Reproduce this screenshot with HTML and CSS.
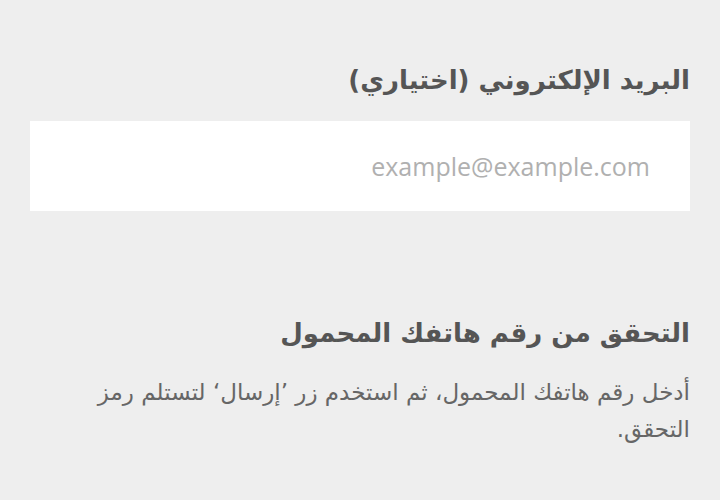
FILE: index.html
```html
<!DOCTYPE html>
<html lang="ar" dir="rtl">
<head>
<meta charset="utf-8">
<link rel="stylesheet" href="styles.css">
</head>
<body>
<div class="page">
  <section class="field">
    <label class="label" for="email">البريد الإلكتروني (اختياري)</label>
    <input class="input" id="email" type="email" placeholder="example@example.com">
  </section>
  <section class="verify">
    <h2 class="title">التحقق من رقم هاتفك المحمول</h2>
    <p class="desc">أدخل رقم هاتفك المحمول، ثم استخدم زر ’إرسال‘ لتستلم رمز التحقق.</p>
  </section>
</div>
</body>
</html>
```
FILE: styles.css
```css
html, body {
  margin: 0;
  padding: 0;
  background: #eeeeee;
}
.page {
  padding: 58px 30px 0 30px;
  font-family: "DejaVu Sans", "Noto Sans", sans-serif;
  display: flex;
  flex-direction: column;
}
.field {
  display: flex;
  flex-direction: column;
}
.label {
  font-size: 26px;
  font-weight: bold;
  color: #555555;
  line-height: 44px;
  margin: 0 0 19px 0;
}
.input {
  box-sizing: border-box;
  height: 90px;
  width: 100%;
  border: none;
  background: #ffffff;
  padding: 0 40px;
  font-family: "Open Sans", "DejaVu Sans", sans-serif;
  font-size: 25px;
  text-align: right;
  direction: ltr;
  color: #555;
  outline: none;
}
.input::placeholder {
  color: #b0b0b0;
}
.verify {
  margin-top: 100px;
}
.title {
  margin: 0 0 19px 0;
  font-size: 26px;
  font-weight: bold;
  color: #555555;
  line-height: 44px;
}
.desc {
  margin: 0;
  font-size: 23px;
  line-height: 37px;
  color: #666666;
}
```
